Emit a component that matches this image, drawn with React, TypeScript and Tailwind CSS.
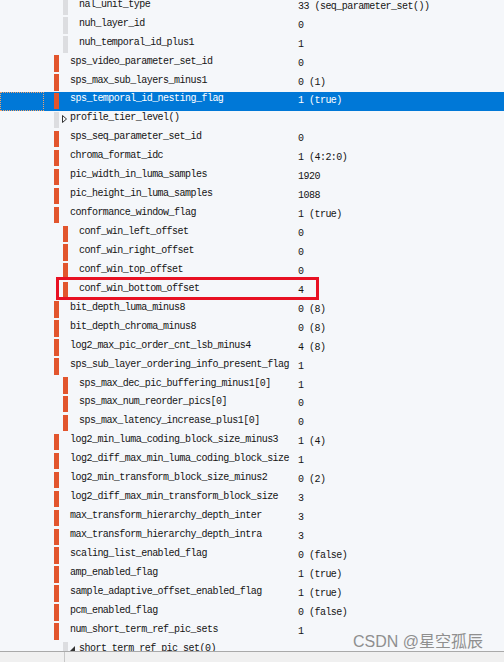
import React from "react";

type Row = {
  name: string;
  value?: string;
  level: 1 | 2;
  marker: "red" | "gray";
  expander?: "closed" | "open";
  selected?: boolean;
};

const rows: Row[] = [
  { name: "nal_unit_type", value: "33 (seq_parameter_set())", level: 2, marker: "gray" },
  { name: "nuh_layer_id", value: "0", level: 2, marker: "gray" },
  { name: "nuh_temporal_id_plus1", value: "1", level: 2, marker: "gray" },
  { name: "sps_video_parameter_set_id", value: "0", level: 1, marker: "red" },
  { name: "sps_max_sub_layers_minus1", value: "0 (1)", level: 1, marker: "red" },
  { name: "sps_temporal_id_nesting_flag", value: "1 (true)", level: 1, marker: "red", selected: true },
  { name: "profile_tier_level()", level: 1, marker: "gray", expander: "closed" },
  { name: "sps_seq_parameter_set_id", value: "0", level: 1, marker: "red" },
  { name: "chroma_format_idc", value: "1 (4:2:0)", level: 1, marker: "red" },
  { name: "pic_width_in_luma_samples", value: "1920", level: 1, marker: "red" },
  { name: "pic_height_in_luma_samples", value: "1088", level: 1, marker: "red" },
  { name: "conformance_window_flag", value: "1 (true)", level: 1, marker: "red" },
  { name: "conf_win_left_offset", value: "0", level: 2, marker: "red" },
  { name: "conf_win_right_offset", value: "0", level: 2, marker: "red" },
  { name: "conf_win_top_offset", value: "0", level: 2, marker: "red" },
  { name: "conf_win_bottom_offset", value: "4", level: 2, marker: "red" },
  { name: "bit_depth_luma_minus8", value: "0 (8)", level: 1, marker: "red" },
  { name: "bit_depth_chroma_minus8", value: "0 (8)", level: 1, marker: "red" },
  { name: "log2_max_pic_order_cnt_lsb_minus4", value: "4 (8)", level: 1, marker: "red" },
  { name: "sps_sub_layer_ordering_info_present_flag", value: "1", level: 1, marker: "red" },
  { name: "sps_max_dec_pic_buffering_minus1[0]", value: "1", level: 2, marker: "red" },
  { name: "sps_max_num_reorder_pics[0]", value: "0", level: 2, marker: "red" },
  { name: "sps_max_latency_increase_plus1[0]", value: "0", level: 2, marker: "red" },
  { name: "log2_min_luma_coding_block_size_minus3", value: "1 (4)", level: 1, marker: "red" },
  { name: "log2_diff_max_min_luma_coding_block_size", value: "1", level: 1, marker: "red" },
  { name: "log2_min_transform_block_size_minus2", value: "0 (2)", level: 1, marker: "red" },
  { name: "log2_diff_max_min_transform_block_size", value: "3", level: 1, marker: "red" },
  { name: "max_transform_hierarchy_depth_inter", value: "3", level: 1, marker: "red" },
  { name: "max_transform_hierarchy_depth_intra", value: "3", level: 1, marker: "red" },
  { name: "scaling_list_enabled_flag", value: "0 (false)", level: 1, marker: "red" },
  { name: "amp_enabled_flag", value: "1 (true)", level: 1, marker: "red" },
  { name: "sample_adaptive_offset_enabled_flag", value: "1 (true)", level: 1, marker: "red" },
  { name: "pcm_enabled_flag", value: "0 (false)", level: 1, marker: "red" },
  { name: "num_short_term_ref_pic_sets", value: "1", level: 1, marker: "red" },
  { name: "short_term_ref_pic_set(0)", level: 2, marker: "gray", expander: "open" },
];

function ClosedArrow() {
  return (
    <svg width="5" height="8" viewBox="0 0 5 8" className="absolute left-[-8px] top-[4px]">
      <path d="M0.5 0.5 L4.5 4 L0.5 7.5 Z" fill="none" stroke="#333" strokeWidth="1" />
    </svg>
  );
}

function OpenArrow() {
  return (
    <svg width="5" height="5" viewBox="0 0 5 5" className="absolute left-[-9px] top-[5px]">
      <path d="M5 0 L5 5 L0 5 Z" fill="#333" />
    </svg>
  );
}

function TreeRow({ row }: { row: Row }) {
  const sel = !!row.selected;
  return (
    <div className={sel ? "relative flex h-[18.95px] shrink-0 bg-[#0078d7]" : "relative flex h-[18.95px] shrink-0"}>
      {sel && <div className="absolute left-0 top-0 h-full w-[44px] border border-dotted border-[#f3a46a]" />}
      <div className="flex w-[298px] shrink-0">
        <div className={row.level === 1 ? "w-[54px] shrink-0" : "w-[63px] shrink-0"} />
        <div
          className={
            row.marker === "red"
              ? "mt-[1px] h-[16.5px] w-[5px] shrink-0 bg-[#e2552d]"
              : "mt-[1px] h-[16.5px] w-[5px] shrink-0 bg-[#dcdde0]"
          }
        />
        <div className="relative ml-[11px] whitespace-nowrap">
          {row.expander === "closed" && <ClosedArrow />}
          {row.expander === "open" && <OpenArrow />}
          <span className={sel ? "block pt-[1.5px] leading-[12px] text-white" : "block pt-[1.5px] leading-[12px] text-[#141414]"}>
            {row.name}
          </span>
        </div>
      </div>
      {row.value && (
        <div className={sel ? "whitespace-nowrap pt-[3.5px] leading-[12px] text-white" : "whitespace-nowrap pt-[3.5px] leading-[12px] text-[#141414]"}>
          {row.value}
        </div>
      )}
    </div>
  );
}

export default function App() {
  return (
    <div className="relative flex h-[662px] w-[504px] flex-col overflow-hidden bg-[#f5f7fa]">
      <div
        className="relative h-[651px] shrink-0 overflow-hidden text-[10px] tracking-[-0.525px]"
        style={{ fontFamily: '"Liberation Mono", "DejaVu Sans Mono", monospace' }}
      >
        <div className="mt-[-2.75px] flex flex-col">
          {rows.map((r, i) => (
            <TreeRow key={i} row={r} />
          ))}
        </div>
        <div className="absolute left-[56px] top-[277px] h-[23px] w-[263px] border-[3px] border-[#e81123]" />
      </div>
      <div className="h-px shrink-0 bg-[#a9a9a9]" />
      <div className="flex flex-1 bg-[#f0f0f0]">
        <div className="w-[65px] shrink-0 border-r border-[#c8c8c8]" />
      </div>
      <div
        className="absolute left-[353px] top-[632px] text-[16px] leading-[20px] text-[#8f8f8f]"
        style={{ fontFamily: '"Liberation Sans", "Noto Sans CJK SC", sans-serif' }}
      >
        CSDN @星空孤辰
      </div>
    </div>
  );
}
